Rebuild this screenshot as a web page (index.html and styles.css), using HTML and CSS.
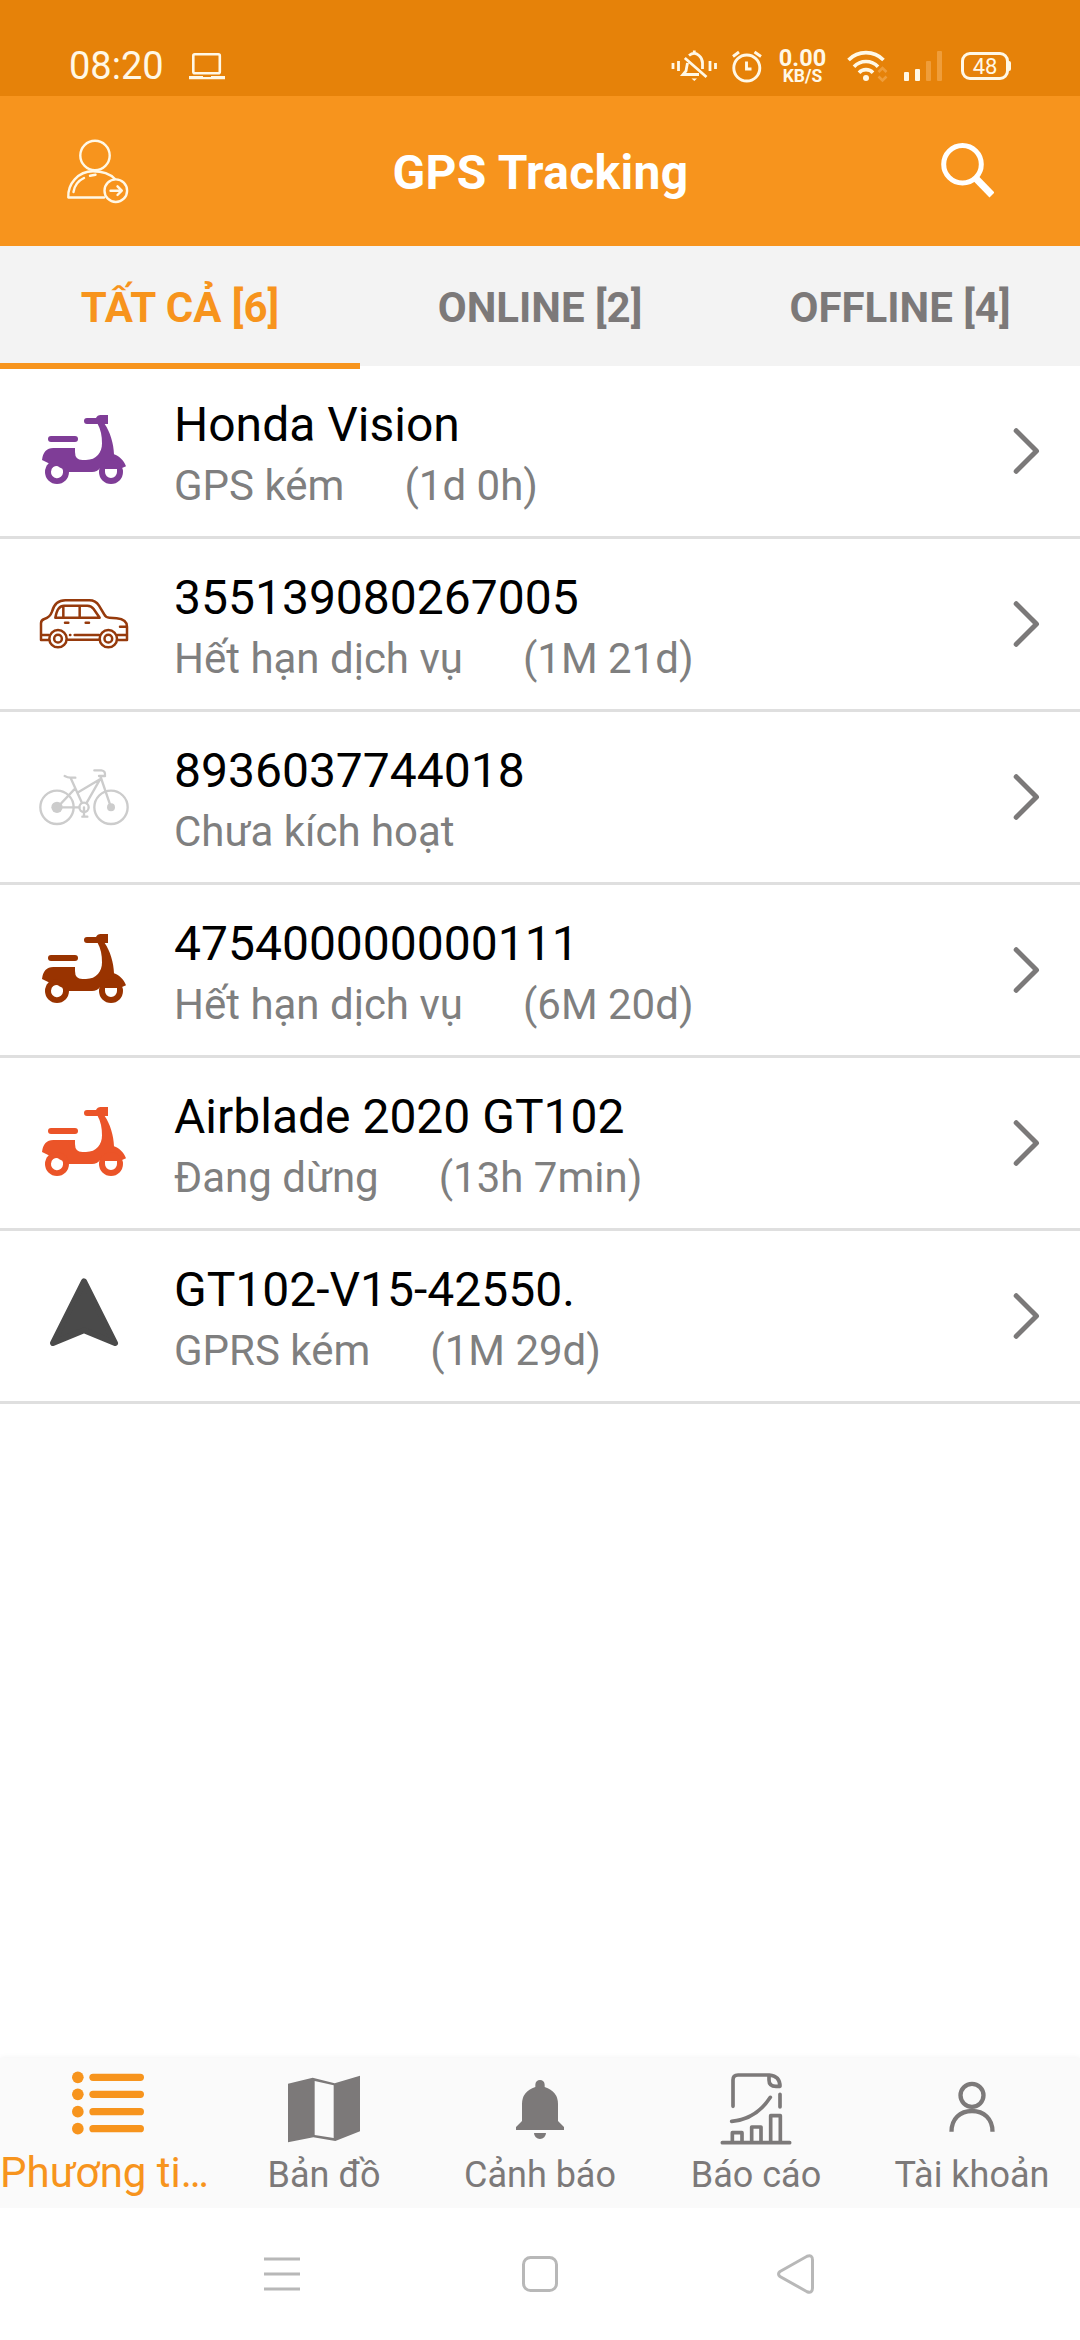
FILE: index.html
```html
<!DOCTYPE html>
<html lang="vi">
<head>
<meta charset="utf-8">
<title>GPS Tracking</title>
<link rel="stylesheet" href="styles.css">
</head>
<body>
<svg class="sprite" aria-hidden="true">
  <symbol id="scooter" viewBox="117 138 270 270">
    <g fill="currentColor">
      <rect x="144" y="228" width="90" height="18" rx="9"/>
      <path d="M261 174H288Q292 165 302 165H324V192H314C330 215 341 250 342 283C358 289 371 300 378 319L366 324L300 325Q292 336 276 336H200L146 310L126 300Q130 264 160 264H225V276Q225 300 247 300H258C290 300 306 278 306 250Q306 215 293 192H261A9 9 0 0 1 261 174Z"/>
      <circle cx="171" cy="336" r="36"/>
      <circle cx="333" cy="336" r="36"/>
    </g>
    <path fill="#fff" d="M160 321Q171 315 178 322L187 326Q190 331 189 338A18 18 0 0 1 153 335Q154 325 160 321ZM315 327H351V336A18 18 0 0 1 315 336Z"/>
  </symbol>
  <symbol id="chevron" viewBox="0 0 30 50">
    <path d="M6.200 4.700L26.500 25L6.200 45.300" fill="none" stroke="#7b7979" stroke-width="5" stroke-linecap="round" stroke-linejoin="round"/>
  </symbol>
</svg>

<header class="status">
  <span class="clock">08:20</span>
  <svg class="laptop" viewBox="189 50 36 34" width="36" height="34" fill="none" stroke="#fff8e6">
    <rect x="193.300" y="54.300" width="26.500" height="19" rx="1.500" stroke-width="2.600"/>
    <path d="M189 77.700H225" stroke-width="3.200"/><path d="M203 76.500H211" stroke="#e68209" stroke-width="1"/>
  </svg>
  <div class="status-right">
    <svg viewBox="672 50 46 34" width="46" height="34" fill="none" stroke="#fff8e6" stroke-width="2.800">
      <path d="M674 63V69M679.500 61V71M711 61V71M716.500 63V69"/>
      <path d="M685.800 58L707.500 77M688.500 63Q687.500 68 687 71L684 74.500H700M690 55.500Q695.300 51 700 55.500Q703.500 58.500 703.500 63V69M695.300 50.500V54"/>
      <path d="M692.500 78.500H698L695.300 81Z" fill="#fff8e6" stroke="none"/>
    </svg>
    <svg viewBox="735 50 30 34" width="30" height="34" fill="none" stroke="#fff8e6" stroke-width="2.900">
      <circle cx="749.800" cy="68" r="13"/>
      <path d="M736 56.500L742 52M757.500 52L764 56.500M749.500 61.500V69H754.500"/>
    </svg>
    <div class="speed"><b>0.00</b><small>KB/S</small></div>
    <svg viewBox="848 50 42 34" width="42" height="34" fill="none" stroke="#fff8e6" stroke-width="3.600">
      <path d="M849.500 60A24.500 24.500 0 0 1 884.500 60M855 66.700A16.500 16.500 0 0 1 879 66.700M860 72.700A9.500 9.500 0 0 1 874 72.700"/>
      <circle cx="867" cy="78" r="3" fill="#fff8e6" stroke="none"/>
      <path d="M879.500 72L883.500 68L887.500 72M879.500 76.500L883.500 80.500L887.500 76.500" stroke="#ef9d3a" stroke-width="2.600"/>
    </svg>
    <svg viewBox="904 50 39 34" width="39" height="34">
      <g fill="#fff8e6"><rect x="904" y="72" width="5" height="9" rx="1"/><rect x="915" y="69" width="5" height="12" rx="1"/></g>
      <g fill="#ef9d3a"><rect x="926" y="61" width="5" height="20" rx="1"/><rect x="937" y="51" width="5" height="30" rx="1"/></g>
    </svg>
    <div class="battery"><span class="level">48</span><span class="nub"></span></div>
  </div>
</header>

<div class="appbar">
  <svg viewBox="65 136 64 68" width="64" height="68" fill="none" stroke="#fff8e6" stroke-width="2.400" stroke-linecap="round" stroke-linejoin="round">
    <circle cx="95" cy="154.500" r="14.700"/>
    <path d="M104 196.500H68.300C67.500 183 78 170.300 93 170.300C102 170.300 110 173 115 178"/>
    <path d="M73.500 191C74.500 185 78.500 179.500 84 177M90 174.700L95.500 173.800"/>
    <circle cx="115.800" cy="189.700" r="11.300"/>
    <path d="M110.500 189.700H121.500M117.500 185.300L121.800 189.700L117.500 194"/>
  </svg>
  <h1>GPS Tracking</h1>
  <svg class="search" viewBox="938 141 56 60" width="56" height="60" fill="none" stroke="#fff">
    <circle cx="962.500" cy="164.300" r="18.800" stroke-width="5"/>
    <path d="M974.500 177L992 195" stroke-width="7"/>
  </svg>
</div>

<nav class="tabs">
  <div class="tab selected">TẤT CẢ [6]</div>
  <div class="tab">ONLINE [2]</div>
  <div class="tab">OFFLINE [4]</div>
</nav>

<main class="list">
  <div class="row">
    <svg class="vehicle purple"><use href="#scooter"/></svg>
    <div class="info"><div class="name">Honda Vision</div><div class="state"><span>GPS kém</span><span>(1d 0h)</span></div></div>
    <svg class="chevron"><use href="#chevron"/></svg>
  </div>
  <div class="row">
    <svg class="vehicle" viewBox="117 657 270 270" fill="none" stroke="#963a0c" stroke-width="7.500" stroke-linejoin="round" stroke-linecap="round">
      <path d="M146 840H123V790Q123 780 133 777Q150 772 156 755Q165 721 196 721H268Q287 721 297 737L312 762Q317 773 328 773L350 775Q381 778 381 800V840H353M203 839H297M224 825H297M123 825H146M353 825H381M360 800H380"/>
      <path d="M166 773Q172 737 192 737H262Q274 737 281 747L299 773ZM190 738V772M239 738V772M195 788H205M257 788H267M210 825H211"/>
      <circle cx="174" cy="836" r="26"/><circle cx="174" cy="836" r="11.500"/>
      <circle cx="325" cy="836" r="26"/><circle cx="325" cy="836" r="11.500"/>
    </svg>
    <div class="info"><div class="name">355139080267005</div><div class="state"><span>Hết hạn dịch vụ</span><span>(1M 21d)</span></div></div>
    <svg class="chevron"><use href="#chevron"/></svg>
  </div>
  <div class="row">
    <svg class="vehicle" viewBox="117 126 270 270" fill="none" stroke="#ccc" stroke-width="7" stroke-linecap="round" stroke-linejoin="round">
      <circle cx="171" cy="292" r="50"/><circle cx="333" cy="292" r="50"/>
      <circle cx="171" cy="292" r="17" fill="#ccc" stroke="none"/><circle cx="333" cy="292" r="12" fill="#ccc" stroke="none"/>
      <circle cx="252" cy="292" r="14"/>
      <path d="M171 292H238M194 198Q203 203 211 203H226M212 204L246 279M225 236L176 288M232 248L300 208L259 280M302 201L333 292M283 181H304Q317 182 315 198H297M252 292V319M247 320H262"/>
    </svg>
    <div class="info"><div class="name">8936037744018</div><div class="state"><span>Chưa kích hoạt</span></div></div>
    <svg class="chevron"><use href="#chevron"/></svg>
  </div>
  <div class="row">
    <svg class="vehicle brown"><use href="#scooter"/></svg>
    <div class="info"><div class="name">475400000000111</div><div class="state"><span>Hết hạn dịch vụ</span><span>(6M 20d)</span></div></div>
    <svg class="chevron"><use href="#chevron"/></svg>
  </div>
  <div class="row">
    <svg class="vehicle red"><use href="#scooter"/></svg>
    <div class="info"><div class="name">Airblade 2020 GT102</div><div class="state"><span>Đang dừng</span><span>(13h 7min)</span></div></div>
    <svg class="chevron"><use href="#chevron"/></svg>
  </div>
  <div class="row">
    <svg class="vehicle" viewBox="117 663 270 270">
      <path d="M252 694L345 879L252 841L159 879Z" fill="#4a4a4a" stroke="#4a4a4a" stroke-width="18" stroke-linejoin="round"/>
    </svg>
    <div class="info"><div class="name">GT102-V15-42550.</div><div class="state"><span>GPRS kém</span><span>(1M 29d)</span></div></div>
    <svg class="chevron"><use href="#chevron"/></svg>
  </div>
</main>

<nav class="bottom">
  <div class="item active">
    <svg viewBox="216 111 216 216" fill="#f7941d">
      <circle cx="233.500" cy="142" r="17.500"/><circle cx="233.500" cy="193" r="17.500"/><circle cx="233.500" cy="245" r="17.500"/><circle cx="233.500" cy="296" r="17.500"/>
      <rect x="268" y="131" width="164" height="22" rx="11"/><rect x="268" y="182" width="164" height="22" rx="11"/><rect x="268" y="234" width="164" height="22" rx="11"/><rect x="268" y="285" width="164" height="22" rx="11"/>
    </svg>
    <span>Phương ti…</span>
  </div>
  <div class="item">
    <svg viewBox="864 129 216 216">
      <path d="M864 161L938 143L1004 160L1080 137V304L1006 333L940 322L864 337Z" fill="#7c7979"/>
      <path d="M944 153L1001 166V324L944 315Z" fill="#fafafa"/>
    </svg>
    <span>Bản đồ</span>
  </div>
  <div class="item">
    <svg viewBox="312 129 216 216" fill="#7c7979">
      <path d="M406 171V164A14 14 0 0 1 434 164V171Q474 184 474 222V273L492 291V300H348V291L366 273V222Q366 184 406 171ZM402 309H438A18 18 0 0 1 402 309Z"/>
    </svg>
    <span>Cảnh báo</span>
  </div>
  <div class="item">
    <svg viewBox="960 129 216 216" fill="none" stroke="#7c7979" stroke-width="11" stroke-linecap="round" stroke-linejoin="round">
      <path d="M999 229V150Q999 135 1014 135H1108Q1140 138 1140 169H1128Q1107 169 1107 150V137M1140 193V231M995 274Q1068 268 1111 202M967 338H1169M997 336V308H1026V336M1055 336V291H1083V336M1112 336V257H1141V336"/>
    </svg>
    <span>Báo cáo</span>
  </div>
  <div class="item">
    <svg viewBox="588 129 216 216" fill="none" stroke="#7c7979" stroke-width="13">
      <circle cx="696" cy="196" r="34.500"/><path d="M634.500 305C634.500 267 660 243 696 243S757.500 267 757.500 305"/>
    </svg>
    <span>Tài khoản</span>
  </div>
</nav>

<footer class="sysnav">
  <svg viewBox="0 0 42 42"><path d="M3 6H39M3 21H39M3 36H39"/></svg>
  <svg viewBox="0 0 42 42"><rect x="4.500" y="4.500" width="33" height="33" rx="7"/></svg>
  <svg viewBox="0 0 42 42"><path d="M3 18.500L30 3.300Q35.500 1.500 35.500 7V35Q35.500 40.500 30 38.700L3 23.500Q0 21 3 18.500Z"/></svg>
</footer>
</body>
</html>
```
FILE: styles.css
```css
* { box-sizing: border-box; }

body {
  margin: 0;
  width: 1080px;
  height: 2340px;
  display: flex;
  flex-direction: column;
  overflow: hidden;
  background: #fff;
  font-family: Roboto, "Noto Sans", sans-serif;
}

svg { display: block; flex: none; }
.sprite { display: none; }

.status {
  height: 96px;
  padding: 36px 69px 0 69px;
  display: flex;
  align-items: center;
  background: #e68209;
  color: #fff8e6;
}
.clock { width: 120px; font-size: 38px; line-height: 60px; }
.laptop { margin-top: 2px; }
.status-right { margin-left: auto; display: flex; align-items: center; gap: 15px; }
.status-right > svg { margin-top: 2px; }
.speed { width: 51px; display: flex; flex-direction: column; align-items: center; margin: 1px 4px 0 0; }
.speed b { font-size: 23.5px; line-height: 19px; }
.speed small { font-size: 17.5px; line-height: 17px; font-weight: 700; }
.battery { margin-left: 3px; display: flex; align-items: center; }
.level {
  width: 48px;
  height: 28px;
  border: 3px solid #fff8e6;
  border-radius: 9px;
  font-size: 22px;
  line-height: 23px;
  text-align: center;
}
.nub { width: 2px; height: 10px; border-radius: 0 2px 2px 0; background: #fff8e6; }

.appbar {
  height: 150px;
  padding: 0 86px 0 65px;
  display: flex;
  align-items: center;
  background: #f7941d;
}
.appbar h1 {
  flex: 1;
  margin: 3px 0 0 14px;
  text-align: center;
  font-size: 48px;
  line-height: 56px;
  font-weight: 700;
  letter-spacing: .3px;
  color: #fff;
}

.tabs { height: 120px; display: grid; grid-template-columns: repeat(3, 1fr); background: #f3f3f3; }
.tab {
  padding-top: 7px;
  border-bottom: 6px solid transparent;
  text-align: center;
  font-size: 42px;
  line-height: 110px;
  font-weight: 700;
  color: #7c7979;
}
.tab.selected { color: #f7941d; border-color: #f7941d; }

.list { flex: 1; }
.row {
  height: 173px;
  padding: 0 40px 0 39px;
  display: flex;
  align-items: center;
  border-bottom: 3px solid #dfdfdf;
}
.vehicle { width: 90px; height: 90px; }
.purple { color: #7f3d97; }
.brown { color: #993300; }
.red { color: #eb5428; }
.info { flex: 1; align-self: flex-start; padding: 30px 0 0 45px; }
.name { font-size: 48px; line-height: 57px; color: #000; }
.state { margin-top: 8px; display: flex; gap: 60px; font-size: 42px; line-height: 49px; color: #7f7f7f; }
.chevron { width: 30px; height: 50px; }

.bottom {
  height: 150px;
  display: grid;
  grid-template-columns: repeat(5, 216px);
  background: #fafafa;
  box-shadow: 0 0 6px rgba(0, 0, 0, .06);
}
.item {
  padding-top: 15px;
  display: flex;
  flex-direction: column;
  align-items: center;
  font-size: 36px;
  line-height: 42px;
  color: #7c7979;
  white-space: nowrap;
}
.item svg { width: 72px; height: 72px; }
.item span { margin-top: 9px; }
.item.active { padding-top: 9px; color: #f7941d; font-size: 42px; line-height: 49px; }
.item.active span { align-self: flex-start; }

.sysnav {
  height: 132px;
  padding: 0 153px;
  display: grid;
  grid-template-columns: repeat(3, 1fr);
  place-items: center;
  background: #fff;
}
.sysnav svg { width: 42px; height: 42px; fill: none; stroke: #b8b8b8; stroke-width: 3; }
```
